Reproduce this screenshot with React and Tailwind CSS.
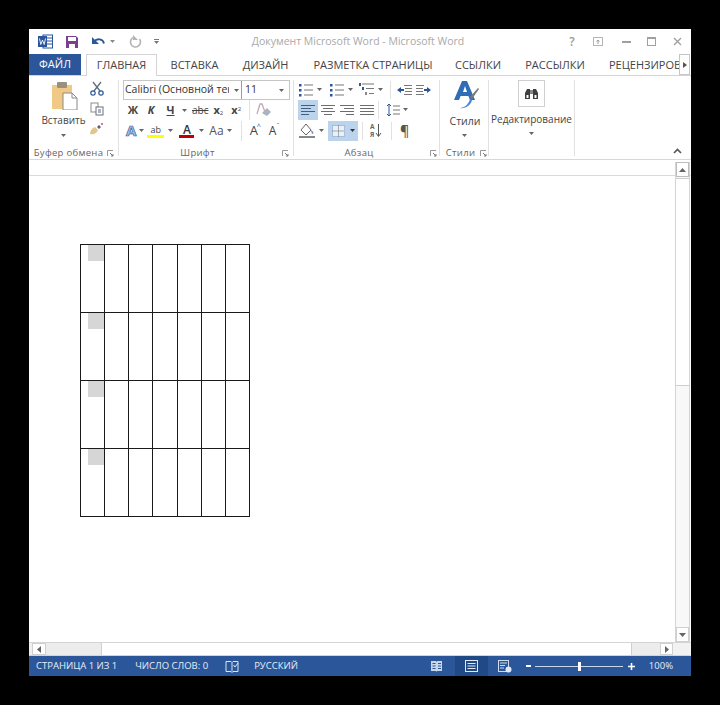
import React from "react";

const Caret = ({ c = "#666" }) => (
  <svg width="5" height="3" viewBox="0 0 5 3" className="shrink-0"><path d="M0 0h5L2.5 3z" fill={c} /></svg>
);

const S = ({ w = 16, h = 16, children, className = "" }) => (
  <svg width={w} height={h} viewBox={`0 0 ${w} ${h}`} className={`shrink-0 ${className}`}>{children}</svg>
);

const Lines = ({ kind }) => {
  const rows = {
    left: [[1, 15], [1, 11], [1, 15], [1, 9]],
    center: [[1, 15], [3, 13], [1, 15], [4, 12]],
    right: [[1, 15], [5, 15], [1, 15], [7, 15]],
    just: [[1, 15], [1, 15], [1, 15], [1, 15]],
  }[kind];
  return (
    <S w={16} h={12}>
      {rows.map((r, i) => (
        <rect key={i} x={r[0]} y={1 + i * 3} width={r[1] - r[0]} height="1" fill={kind === "left" ? "#3f5f85" : "#6d6d6d"} />
      ))}
    </S>
  );
};

const ListIcon = ({ c = "#2b579a" }) => (
  <S w={16} h={14}>
    {[1, 6, 11].map((y) => (
      <React.Fragment key={y}>
        <rect x="1" y={y} width="2.5" height="2.5" fill={c} />
        <rect x="6" y={y + 0.5} width="9" height="1" fill="#777" />
      </React.Fragment>
    ))}
  </S>
);

const Multi = () => (
  <S w={16} h={15}>
    <rect x="0" y="1" width="2" height="3" fill="#2b579a" />
    <rect x="3" y="1.5" width="12" height="1" fill="#777" />
    <rect x="3" y="5" width="2" height="3" fill="#2b579a" />
    <rect x="7" y="6" width="8" height="1" fill="#777" />
    <rect x="6" y="10" width="2" height="3" fill="#888" />
    <rect x="10" y="11" width="5" height="1" fill="#777" />
  </S>
);

const Indent = ({ flip }) => (
  <S w={17} h={12}>
    <g transform={flip ? "translate(17 0) scale(-1 1)" : undefined}>
      <path d="M1 6l4-3v2h3v2H5v2z" fill="#2b579a" />
      <rect x="8" y="1" width="8" height="1" fill="#777" />
      <rect x="9" y="4" width="7" height="1" fill="#777" />
      <rect x="9" y="7" width="7" height="1" fill="#777" />
      <rect x="8" y="10" width="8" height="1" fill="#777" />
    </g>
  </S>
);

const Tab = ({ children, active, className = "" }) => (
  <div
    className={`h-[22px] flex items-center justify-center whitespace-nowrap text-[11px] text-[#444] ${
      active ? "bg-white border border-b-0 border-[#d4d4d4] text-[#2b579a]" : ""
    } ${className}`}
  >
    {children}
  </div>
);

const GroupLabel = ({ children, launcher, className = "" }) => (
  <div className={`h-[14px] -mb-[4px] flex items-center text-[9.5px] tracking-[0.3px] text-[#666] ${className}`}>
    <span className="flex-1 text-center whitespace-nowrap">{children}</span>
    {launcher && (
      <S w={7} h={7} className="ml-[2px]">
        <path d="M0.5 6V0.5H6" stroke="#999" fill="none" />
        <path d="M3 3l3 3M6 4v2H4" stroke="#777" fill="none" />
      </S>
    )}
  </div>
);

const Sep = ({ h = "h-[20px]", className = "" }) => <div className={`w-px bg-[#e1e1e1] ${h} ${className}`} />;

const CELLS = [0, 1, 2, 3, 4, 5, 6];

function DocTable() {
  return (
    <table className="border-collapse table-fixed w-[170px] ml-[51px] mt-[68px]">
      <tbody>
        {[0, 1, 2, 3].map((r) => (
          <tr key={r} className="h-[68px]">
            {CELLS.map((c) => (
              <td key={c} className="border border-[#1a1a1a] p-0 align-top w-[24px]">
                {c === 0 ? <div className="ml-[7px] w-[16px] h-[16px] bg-[#d6d6d6]" /> : null}
              </td>
            ))}
          </tr>
        ))}
      </tbody>
    </table>
  );
}

export default function App() {
  return (
    <div className="w-[720px] h-[705px] bg-black pt-[29px] pl-[29px] overflow-hidden font-['Open_Sans','Noto_Sans',sans-serif]">
      <div className="w-[662px] h-[647px] bg-white flex flex-col">
        {/* Title bar */}
        <div className="h-[25px] flex items-center relative shrink-0 pl-[9px]">
          <S w={15} h={15}>
            <rect x="5" y="1" width="9.5" height="13" fill="#fff" stroke="#2b579a" />
            <path d="M9 4h5M9 7h5M9 10h5" stroke="#2b579a" />
            <rect x="0" y="2" width="9" height="11" fill="#2b579a" />
            <path d="M1.5 4.5l1.3 6 1.7-4.5 1.7 4.5 1.3-6" stroke="#fff" fill="none" strokeWidth="0.9" />
          </S>
          <S w={14} h={14} className="ml-[12px]">
            <path d="M1 1h10l2 2v10H1z" fill="#7a3f8f" />
            <rect x="3" y="2" width="8" height="4" fill="#fff" />
            <rect x="4" y="9" width="6" height="4" fill="#fff" />
          </S>
          <S w={16} h={14} className="ml-[12px]">
            <path d="M3 6.5c3-3.5 9-3 10 2" stroke="#2b579a" strokeWidth="1.8" fill="none" />
            <path d="M1 2v7h7z" fill="#2b579a" />
          </S>
          <div className="ml-[3px]"><Caret c="#8a8a8a" /></div>
          <S w={14} h={14} className="ml-[13px]">
            <path d="M11.5 4A5 5 0 1 1 6 2.2" stroke="#b4b4b4" strokeWidth="1.6" fill="none" />
            <path d="M5 0v5h5z" fill="#b4b4b4" />
          </S>
          <div className="ml-[12px] flex flex-col items-center gap-[1px]">
            <div className="w-[5px] h-px bg-[#777]" />
            <Caret c="#777" />
          </div>
          <div className="absolute left-0 w-[658px] text-center text-[10.5px] text-[#a9a9a9] whitespace-nowrap">
            Документ Microsoft Word - Microsoft Word
          </div>
          <div className="ml-auto flex items-center text-[#9a9a9a] pr-[9px] relative">
            <span className="text-[12px] font-semibold w-[10px] text-center">?</span>
            <S w={10} h={9} className="ml-[16px]">
              <rect x="0.5" y="0.5" width="9" height="8" fill="none" stroke="#b5b5b5" />
              <path d="M5 7V3M3.5 4.5L5 3l1.5 1.5" stroke="#999" fill="none" />
            </S>
            <div className="w-[9px] h-[2px] bg-[#a0a0a0] ml-[19px]" />
            <div className="w-[9px] h-[9px] border border-[#a0a0a0] border-t-2 ml-[16px]" />
            <S w={9} h={9} className="ml-[17px]">
              <path d="M1 1l7 7M8 1L1 8" stroke="#a0a0a0" strokeWidth="1.4" />
            </S>
          </div>
        </div>

        {/* Tabs */}
        <div className="h-[22px] flex items-end shrink-0 border-b border-[#d4d4d4] relative">
          <div className="w-[52px] h-[21px] bg-[#2b579a] text-white text-[11px] flex items-center justify-center">ФАЙЛ</div>
          <div className="flex h-[22px] -mb-px">
            <Tab active className="w-[71px] ml-[5px] bg-white">ГЛАВНАЯ</Tab>
            <Tab className="w-[57px] ml-[9px]">ВСТАВКА</Tab>
            <Tab className="w-[55px] ml-[15px]">ДИЗАЙН</Tab>
            <Tab className="w-[122px] ml-[19px]">РАЗМЕТКА СТРАНИЦЫ</Tab>
            <Tab className="w-[50px] ml-[19px]">ССЫЛКИ</Tab>
            <Tab className="w-[64px] ml-[20px]">РАССЫЛКИ</Tab>
            <Tab className="w-[71px] ml-[22px] justify-start overflow-hidden">РЕЦЕНЗИРОВАНИЕ</Tab>
          </div>
          <div className="absolute right-px top-0 w-[11px] h-[21px] bg-white border border-[#c6c6c6] flex items-center justify-center">
            <S w={4} h={6}><path d="M0 0l4 3-4 3z" fill="#555" /></S>
          </div>
        </div>

        {/* Ribbon */}
        <div className="h-[84px] flex shrink-0 border-b border-[#d8d8d8] relative">
          {/* Clipboard */}
          <div className="w-[90px] border-r border-[#e1e1e1] mt-[4px] mb-[3px] flex flex-col">
            <div className="flex-1 flex">
              <div className="w-[56px] flex flex-col items-center pt-[2px] pl-[13px]">
                <S w={28} h={28}>
                  <rect x="2" y="3" width="20" height="24" fill="#f1c986" />
                  <rect x="7" y="0" width="10" height="6" rx="1" fill="#9a8f80" />
                  <path d="M13 11h9l5 5v12H13z" fill="#fff" stroke="#8a8a8a" />
                  <path d="M22 11v5h5" stroke="#8a8a8a" fill="none" />
                </S>
                <div className="text-[10px] text-[#444] mt-[3px] whitespace-nowrap">Вставить</div>
                <div className="mt-[6px]"><Caret /></div>
              </div>
              <div className="flex flex-col items-center pl-[4px] pt-[1px] gap-[6px]">
                <S w={14} h={15}>
                  <path d="M3 1l7 9M11 1L4 10" stroke="#5c6f85" strokeWidth="1.3" fill="none" />
                  <circle cx="3" cy="12" r="2.2" fill="none" stroke="#2b579a" strokeWidth="1.2" />
                  <circle cx="11" cy="12" r="2.2" fill="none" stroke="#2b579a" strokeWidth="1.2" />
                </S>
                <S w={14} h={14}>
                  <rect x="1" y="1" width="7" height="9" fill="#fff" stroke="#8b8b8b" />
                  <rect x="6" y="5" width="7" height="8" fill="#fff" stroke="#6f6f6f" />
                  <path d="M8 8h3M8 10h3" stroke="#4a6a95" />
                </S>
                <S w={15} h={14}>
                  <path d="M1 12c0-3 2-6 5-7l3 3c-1 3-4 5-8 4z" fill="#e3c58a" />
                  <path d="M8 5l2-2 2 2-2 2z" fill="#55627a" />
                  <circle cx="13" cy="2" r="1" fill="#d45" />
                </S>
              </div>
            </div>
            <GroupLabel launcher className="pl-[3px] pr-[4px]">Буфер обмена</GroupLabel>
          </div>

          {/* Font */}
          <div className="w-[175px] border-r border-[#e1e1e1] mt-[4px] mb-[3px] flex flex-col pl-[4px] pr-[2px]">
            <div className="h-[20px] w-[167px] flex border border-[#c6c6c6] text-[10.5px] text-[#333] shrink-0">
              <div className="w-[118px] flex items-center border-r border-[#9a9a9a] pl-px overflow-hidden">
                <span className="w-[104px] overflow-hidden whitespace-nowrap block">Calibri (Основной тек</span>
                <div className="ml-[5px]"><Caret /></div>
              </div>
              <div className="flex-1 flex items-center pl-[3px]">
                <span>11</span>
                <div className="ml-auto mr-[5px]"><Caret /></div>
              </div>
            </div>
            <div className="h-[20px] flex items-center text-[11px] font-bold text-[#444] pl-[4px] shrink-0">
              <span className="w-[12px] text-center">Ж</span>
              <span className="w-[12px] text-center ml-[6px] italic">К</span>
              <span className="w-[11px] text-center ml-[8px] underline">Ч</span>
              <div className="ml-[6px]"><Caret /></div>
              <span className="ml-[5px] text-[10px] font-normal line-through">abc</span>
              <span className="ml-[5px] relative">x<sub className="text-[6px] font-normal">2</sub></span>
              <span className="ml-[8px] relative">x<sup className="text-[6px] font-normal">2</sup></span>
              <Sep className="ml-[8px]" />
              <S w={17} h={15} className="ml-[5px]">
                <path d="M2 11L5 1h2l3 8" stroke="#c9a8b5" strokeWidth="1.3" fill="none" />
                <path d="M7 10l5-5 4 4-4 4z" fill="#a9b3c2" />
              </S>
            </div>
            <div className="h-[21px] flex items-center text-[#555] pl-[3px] shrink-0">
              <span className="text-[15px] leading-none text-[#a9c4e8] font-bold [-webkit-text-stroke:0.7px_#2b579a]">A</span>
              <div className="ml-[3px]"><Caret /></div>
              <div className="ml-[3px] w-[17px] flex flex-col items-center">
                <span className="text-[9px] leading-[11px] text-[#444]">ab</span>
                <div className="w-[17px] h-[3px] bg-[#ffff00]" />
              </div>
              <div className="ml-[4px]"><Caret /></div>
              <div className="ml-[6px] w-[15px] flex flex-col items-center">
                <span className="text-[12px] leading-[11px] text-[#333] font-semibold">A</span>
                <div className="w-[15px] h-[3px] bg-[#c00000]" />
              </div>
              <div className="ml-[5px]"><Caret /></div>
              <span className="ml-[5px] text-[12px] text-[#555]">Aa</span>
              <div className="ml-[3px]"><Caret /></div>
              <Sep className="ml-[9px]" />
              <span className="ml-[8px] text-[13px] leading-none text-[#444] relative">A<span className="absolute -right-[3px] -top-[1px] text-[7px] leading-none text-[#2b579a]">^</span></span>
              <span className="ml-[11px] text-[12px] leading-none text-[#444] relative">A<span className="absolute -right-[3px] -top-[3px] text-[7px] leading-none text-[#2b579a]">ˇ</span></span>
            </div>
            <div className="flex-1" />
            <GroupLabel launcher className="pr-[2px]"><span className="block pr-[8px]">Шрифт</span></GroupLabel>
          </div>

          {/* Paragraph */}
          <div className="w-[146px] border-r border-[#e1e1e1] mt-[4px] mb-[3px] flex flex-col pl-[4px]">
            <div className="h-[19px] flex items-center shrink-0">
              <ListIcon />
              <div className="ml-[3px]"><Caret /></div>
              <div className="ml-[7px]"><ListIcon /></div>
              <div className="ml-[3px]"><Caret /></div>
              <div className="ml-[6px]"><Multi /></div>
              <div className="ml-[3px]"><Caret /></div>
              <Sep h="h-[18px]" className="ml-[7px]" />
              <div className="ml-[5px]"><Indent /></div>
              <div className="ml-[2px]"><Indent flip /></div>
            </div>
            <div className="h-[21px] flex items-center shrink-0">
              <div className="w-[20px] h-[20px] bg-[#bcd3ec] flex items-center justify-center"><Lines kind="left" /></div>
              <div className="ml-[2px]"><Lines kind="center" /></div>
              <div className="ml-[3px]"><Lines kind="right" /></div>
              <div className="ml-[4px]"><Lines kind="just" /></div>
              <Sep h="h-[18px]" className="ml-[3px]" />
              <S w={14} h={14} className="ml-[7px]">
                <path d="M3 1v12M1 3l2-2 2 2M1 11l2 2 2-2" stroke="#2b579a" fill="none" />
                <path d="M7 3h7M7 7h7M7 11h7" stroke="#777" />
              </S>
              <div className="ml-[3px]"><Caret /></div>
            </div>
            <div className="h-[21px] flex items-center shrink-0">
              <S w={19} h={17}>
                <path d="M3 8l5-6 5 6-5 5z" fill="#fff" stroke="#666" />
                <path d="M13 8c2 1 3 3 2 4-1 0-2-2-2-4z" fill="#6b8fc0" />
                <rect x="1" y="14" width="16" height="2" fill="#888" />
              </S>
              <div className="ml-[2px]"><Caret /></div>
              <div className="ml-[4px] w-[30px] h-[20px] bg-[#bcd3ec] flex items-center">
                <S w={16} h={14} className="ml-[3px]">
                  <rect x="1.5" y="1.5" width="12" height="11" fill="#e8f0f9" stroke="#7f9dc4" strokeDasharray="1 1" />
                  <path d="M7.5 1.5v11M1.5 7h12" stroke="#666" strokeDasharray="1 1" />
                </S>
                <div className="ml-[3px]"><Caret c="#333" /></div>
              </div>
              <Sep h="h-[18px]" className="ml-[4px]" />
              <div className="ml-[7px] flex items-center w-[16px]">
                <div className="flex flex-col text-[6.5px] leading-[8px] font-bold text-[#666]"><span>А</span><span>Я</span></div>
                <S w={7} h={15}><path d="M3.5 1v12M1 10l2.5 3.5L6 10" stroke="#555" fill="none" /></S>
              </div>
              <Sep h="h-[18px]" className="ml-[5px]" />
              <span className="ml-[8px] text-[14px] leading-none text-[#555] font-semibold">¶</span>
            </div>
            <div className="flex-1" />
            <GroupLabel launcher className="pr-[2px]"><span className="block -ml-[8px]">Абзац</span></GroupLabel>
          </div>

          {/* Styles */}
          <div className="w-[49px] border-r border-[#e1e1e1] mt-[4px] mb-[3px] flex flex-col">
            <div className="flex-1 flex flex-col items-center">
              <S w={28} h={30} className="ml-[1px]">
                <path d="M11 1h5l8 19h-5l-1.6-4h-7.8L8 20H3z M12 12h4l-2-6z" fill="#2f6db5" fillRule="evenodd" />
                <path d="M19 17L27 8l1 1-7 10z" fill="#7a7a7a" />
                <path d="M8 28c4 0 9-2 11-9l2 1c-1 5-6 9-13 8z" fill="#4c8ad0" />
              </S>
              <div className="text-[10.5px] text-[#444] mt-[4px] ml-[2px]">Стили</div>
              <div className="mt-[4px]"><Caret /></div>
            </div>
            <GroupLabel launcher className="pl-[3px] pr-[1px]">Стили</GroupLabel>
          </div>

          {/* Editing */}
          <div className="w-[86px] border-r border-[#e1e1e1] mt-[4px] mb-[3px] flex flex-col items-center">
            <div className="w-[27px] h-[27px] border border-[#d0d0d0] bg-white flex items-center justify-center">
              <S w={15} h={13}>
                <path d="M1 12V6l2-4h3v10z M14 12V6l-2-4H9v10z" fill="#3f3f3f" />
                <rect x="6" y="3" width="3" height="4" fill="#888" />
                <rect x="2.5" y="8" width="2" height="3" fill="#fff" />
                <rect x="10.5" y="8" width="2" height="3" fill="#fff" />
              </S>
            </div>
            <div className="text-[10px] text-[#444] mt-[5px] whitespace-nowrap">Редактирование</div>
            <div className="mt-[5px]"><Caret /></div>
          </div>

          <S w={9} h={6} className="absolute right-[9px] bottom-[5px]">
            <path d="M1 5l3.5-3.5L8 5" stroke="#555" strokeWidth="1.6" fill="none" />
          </S>
        </div>

        {/* Ruler strip */}
        <div className="h-[16px] shrink-0 border-b border-[#dadada] bg-white" />

        {/* Document area */}
        <div className="flex-1 flex min-h-0 relative">
          <div className="flex-1 min-w-0">
            <DocTable />
          </div>
          <div className="w-[15px] -mt-[14px] mr-px flex flex-col border-x border-[#d4d4d4] bg-[#f8f8f8] relative">
            <div className="h-[15px] border border-[#bdbdbd] bg-white flex items-center justify-center shrink-0">
              <S w={7} h={4}><path d="M3.5 0L7 4H0z" fill="#666" /></S>
            </div>
            <div className="h-[208px] w-full bg-white border-y border-[#cfcfcf] mt-px shrink-0" />
            <div className="flex-1" />
            <div className="h-[15px] border border-[#d0d0d0] bg-white flex items-center justify-center shrink-0">
              <S w={7} h={4}><path d="M0 0h7L3.5 4z" fill="#666" /></S>
            </div>
          </div>
        </div>

        {/* Horizontal scrollbar */}
        <div className="h-[14px] shrink-0 flex items-stretch pl-[3px] bg-[#efefef] border-y border-[#d4d4d4]">
          <div className="w-[14px] bg-white border border-[#d0d0d0] flex items-center justify-center shrink-0">
            <S w={4} h={7}><path d="M4 0v7L0 3.5z" fill="#666" /></S>
          </div>
          <div className="w-[55px] bg-[#ececec] shrink-0" />
          <div className="w-[531px] bg-white border-x border-[#cfcfcf] shrink-0" />
          <div className="w-[28px] bg-[#ececec] shrink-0" />
          <div className="w-[13px] bg-white border border-[#d0d0d0] flex items-center justify-center shrink-0">
            <S w={4} h={7}><path d="M0 0v7l4-3.5z" fill="#666" /></S>
          </div>
          <div className="flex-1 bg-[#f2f2f2]" />
        </div>

        {/* Status bar */}
        <div className="h-[20px] shrink-0 bg-[#2b579a] flex items-center text-[#e6edf6] text-[9.5px] relative">
          <span className="ml-[7px] whitespace-nowrap">СТРАНИЦА 1 ИЗ 1</span>
          <span className="ml-[18px] whitespace-nowrap">ЧИСЛО СЛОВ: 0</span>
          <S w={14} h={13} className="ml-[17px]">
            <path d="M1 1.5h5l1 1 1-1h5v10H8l-1 1-1-1H1zM7 2.5v9" stroke="#dbe5f2" fill="none" />
            <path d="M8.5 5l1.5 2 3-4" stroke="#dbe5f2" fill="none" />
          </S>
          <span className="ml-[15px] whitespace-nowrap">РУССКИЙ</span>
          <div className="ml-auto flex items-center h-full">
            <S w={13} h={12}>
              <path d="M1 1h5l.5 1 .5-1h5v10H7l-.5 1-.5-1H1z" fill="#c8d6ea" />
              <path d="M2.5 3.5h3M2.5 6h3M2.5 8.5h3M8 3.5h3M8 6h3M8 8.5h3" stroke="#2b579a" />
            </S>
            <div className="ml-[12px] w-[33px] h-full bg-[#1f4a85] flex items-center justify-center">
              <S w={13} h={12}>
                <rect x="0.5" y="0.5" width="12" height="11" fill="none" stroke="#dfe8f4" />
                <path d="M2.5 3.5h8M2.5 6h8M2.5 8.5h8" stroke="#dfe8f4" />
              </S>
            </div>
            <S w={14} h={13} className="ml-[10px]">
              <rect x="0.5" y="0.5" width="10" height="11" fill="none" stroke="#cfdcee" />
              <path d="M2 3h7M2 5.5h5M2 8h4" stroke="#cfdcee" />
              <circle cx="10.5" cy="9.5" r="3" fill="#dfe8f4" />
            </S>
            <div className="ml-[14px] w-[5px] h-[2px] bg-white" />
            <div className="ml-[4px] w-[88px] h-px bg-[#c7d6ea] relative">
              <div className="absolute left-[43px] -top-[4px] w-[3px] h-[9px] bg-white" />
            </div>
            <S w={7} h={7} className="ml-[5px]"><path d="M3.5 0v7M0 3.5h7" stroke="#fff" strokeWidth="1.6" /></S>
            <span className="ml-[13px] mr-[18px] w-[25px] text-right whitespace-nowrap">100%</span>
          </div>
        </div>
      </div>
    </div>
  );
}
